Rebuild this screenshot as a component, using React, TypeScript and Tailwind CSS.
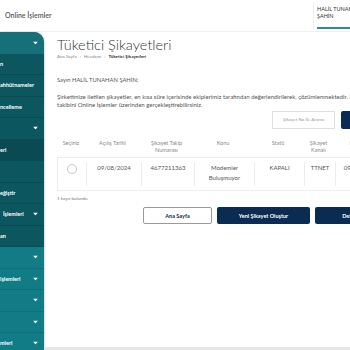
import {ReactNode} from "react";

type NavItem = {label: string; caret?: boolean; tone: "head" | "dark" | "active" | "light"; indent?: number};

const navItems: NavItem[] = [
    {label: "", caret: true, tone: "head"},
    {label: "n", tone: "dark"},
    {label: "ahhütnameler", tone: "dark"},
    {label: "ncelleme", tone: "dark"},
    {label: "", caret: true, tone: "dark"},
    {label: "eri", tone: "active"},
    {label: "", tone: "dark"},
    {label: "eğiştir", tone: "dark"},
    {label: "İşlemleri", caret: true, tone: "dark", indent: 3},
    {label: "an", tone: "dark"},
    {label: "", caret: true, tone: "light"},
    {label: "işlemleri", caret: true, tone: "light"},
    {label: "", caret: true, tone: "light"},
    {label: "", caret: true, tone: "light"},
    {label: "mleri", caret: true, tone: "light"},
];

const toneClass = {
    head: "bg-[#15707a]",
    dark: "bg-[#0c5660] border-b border-[#0a4b54]",
    active: "bg-[#0a4a53] border-b border-[#0a4b54]",
    light: "bg-[#117b86] border-b border-[#0f6f79]",
};

const Caret = () => (
    <svg width="5" height="3" viewBox="0 0 5 3" className="absolute right-[6px] top-1/2 -translate-y-1/2">
        <polygon points="0,0 5,0 2.5,3" fill="#ffffff" />
    </svg>
);

const Cell = ({children, first, className = ""}: {children?: ReactNode; first?: boolean; className?: string}) => (
    <div className={`flex justify-center text-center ${first ? "" : "border-l border-[#ececec]"} ${className}`}>
        {children}
    </div>
);

export default function App() {
    // column widths of the complaints table
    const cols = "grid grid-cols-[28px_55px_53px_60px_50px_31px_50px]";

    return (
        <div className="w-[350px] h-[350px] overflow-hidden bg-white flex flex-col font-['Lato','Open_Sans',sans-serif]">
            {/* Top bar */}
            <div className="h-[32px] shrink-0 flex items-center justify-between border-b border-[#efefef]">
                <span className="pl-[5px] text-[7px] text-[#555] font-semibold">Online İşlemler</span>
                <div className="h-[26px] w-[37px] border-l border-[#eeeeee] flex flex-col">
                    <div className="flex-1 pl-[3px] pt-[3px] text-[5.5px] leading-[7px] text-[#333] whitespace-nowrap">
                        HALİL TUNAHAN<br />ŞAHİN
                    </div>
                    <div className="ml-[3px] h-[2px] bg-[#2b8c96]" />
                </div>
            </div>

            <div className="flex flex-1 min-h-0">
                {/* Sidebar */}
                <div className="w-[44px] shrink-0 rounded-tr-[10px] overflow-hidden bg-[#117b86] shadow-[1px_0_2px_rgba(0,0,0,0.15)]">
                    {navItems.map((item, i) => (
                        <div
                            key={i}
                            className={`relative h-[21.5px] flex items-center text-[5.5px] font-bold text-white whitespace-nowrap ${toneClass[item.tone]}`}
                        >
                            <span style={{paddingLeft: item.indent ?? 0}}>{item.label}</span>
                            {item.caret && <Caret />}
                        </div>
                    ))}
                </div>

                {/* Main */}
                <div className="flex-1 min-w-0 flex flex-col">
                    <div className="w-[340px] shrink-0 pl-[13px]">
                        <h1 className="pt-[3px] text-[14.5px] leading-[19px] font-light text-[#333] whitespace-nowrap">
                            Tüketici Şikayetleri
                        </h1>
                        <div className="text-[4.5px] text-[#888] whitespace-nowrap flex gap-[3px]">
                            <span>Ana Sayfa</span>
                            <span>›</span>
                            <span>Hesabım</span>
                            <span>›</span>
                            <span className="text-[#333] font-bold">Tüketici Şikayetleri</span>
                        </div>

                        <p className="mt-[15px] text-[5.8px] text-[#555] whitespace-nowrap">Sayın HALİL TUNAHAN ŞAHİN;</p>
                        <p className="mt-[9px] text-[6px] leading-[8px] text-[#555] whitespace-nowrap">
                            Şirketimize iletilen şikayetler, en kısa süre içerisinde ekiplerimiz tarafından değerlendirilerek, çözümlenmektedir. İletilen şikayetlerinizin
                            <br />
                            takibini Online İşlemler üzerinden gerçekleştirebilirsiniz.
                        </p>

                        {/* Search */}
                        <div className="mt-[2px] flex justify-end gap-[6px] h-[18px]">
                            <div className="w-[63px] border border-[#e0e0e0] flex items-center justify-center text-[4.5px] text-[#999]">
                                Şikayet No İle Arama
                            </div>
                            <div className="w-[43px] bg-[#0b2c52] rounded-[2px]" />
                        </div>

                        {/* Table head */}
                        <div className={`${cols} mt-[11px] text-[5.5px] leading-[7px] text-[#8a8a8a]`}>
                            <Cell first>Seçiniz</Cell>
                            <div className="text-center">Açılış Tarihi</div>
                            <div className="text-center">Şikayet Takip<br />Numarası</div>
                            <div className="text-center">Konu</div>
                            <div className="text-center">Statü</div>
                            <div className="text-center">Şikayet<br />Kanalı</div>
                            <div className="text-center">Kapanış<br />Tarihi</div>
                        </div>

                        {/* Table row */}
                        <div className={`${cols} mt-[3px] h-[34px] border border-[#ececec] py-[4px] text-[6px] leading-[10px] text-[#555]`}>
                            <Cell first>
                                <div className="mt-[2px] w-[10px] h-[10px] rounded-full border border-[#c8c8c8]" />
                            </Cell>
                            <Cell className="pt-[1px]">09/08/2024</Cell>
                            <Cell className="pt-[1px]">4677211363</Cell>
                            <Cell className="pt-[1px]">Modemler<br />Buluşmuyor</Cell>
                            <Cell className="pt-[1px]">KAPALI</Cell>
                            <Cell className="pt-[1px]">TTNET</Cell>
                            <Cell className="pt-[1px]">09/08/2024</Cell>
                        </div>

                        <p className="mt-[5px] text-[4.5px] text-[#777]">1 kayıt bulundu</p>

                        {/* Actions */}
                        <div className="mt-[4px] flex justify-end gap-[5px] h-[17px] text-[5.5px] font-bold">
                            <button className="w-[69px] border border-[#9a9a9a] rounded-[2px] text-[#0b2c52]">Ana Sayfa</button>
                            <button className="w-[93px] bg-[#0b2c52] rounded-[2px] text-white">Yeni Şikayet Oluştur</button>
                            <button className="w-[69px] bg-[#0b2c52] rounded-[2px] text-white">Detay</button>
                        </div>
                    </div>

                    {/* Footer strip */}
                    <div className="mt-auto h-[3px] bg-[#e6e6e6]" />
                </div>
            </div>
        </div>
    );
}
